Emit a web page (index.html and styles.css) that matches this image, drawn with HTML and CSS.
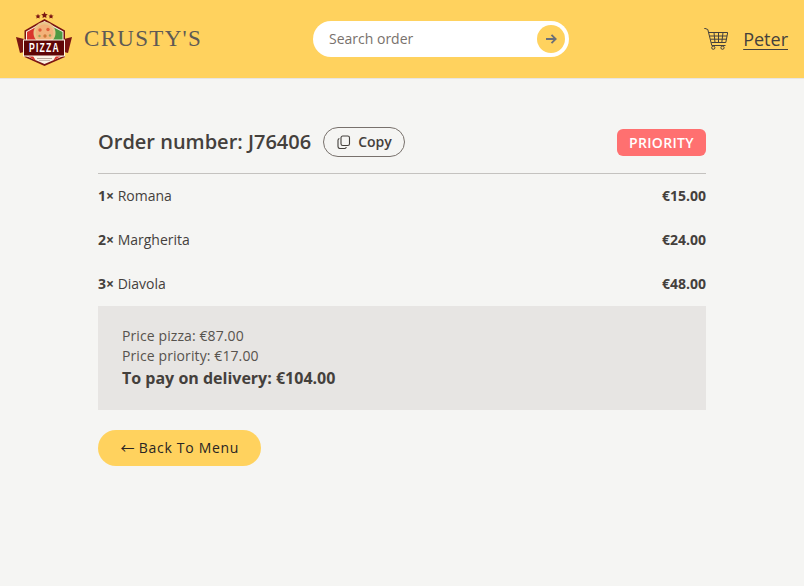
FILE: index.html
```html
<!DOCTYPE html>
<html lang="en">
<head>
<meta charset="utf-8">
<title>Crusty's</title>
<link rel="stylesheet" href="styles.css">
</head>
<body>
<header class="header">
  <a class="brand" href="#">
    <svg class="logo" width="56" height="56" viewBox="0 0 56 56">
      <path d="M22 2.800l.8 1.600 1.800.2-1.300 1.200.3 1.800-1.600-.9-1.600.9.3-1.800-1.300-1.200 1.800-.2zM28.500 .8l1 2.100 2.300.3-1.700 1.600.4 2.300-2-1.100-2 1.100.4-2.300-1.700-1.600 2.300-.3zM35 2.800l.8 1.600 1.800.2-1.300 1.200.3 1.800-1.600-.9-1.600.9.3-1.800-1.300-1.200 1.800-.2z" fill="#7a1512"/>
      <path d="M28.500 8L49 19.500V46L28.500 55 8.500 46V19.500z" fill="#7a1512"/>
      <path d="M28.500 10L47.500 20.500V45L28.500 53 10 45V20.500z" fill="#fbf3e4"/>
      <path d="M11 21L20 16 23 30H11z" fill="#d9352d"/>
      <path d="M46.500 21L37 16 34 30H46.500z" fill="#4d9a43"/>
      <circle cx="28.500" cy="22" r="11" fill="#eac68a"/>
      <circle cx="28.500" cy="22" r="8.800" fill="#f3b27a"/>
      <circle cx="24" cy="19" r="1.700" fill="#e0603a"/>
      <circle cx="32" cy="18.500" r="1.700" fill="#e0603a"/>
      <circle cx="29" cy="25" r="1.700" fill="#d07a3a"/>
      <circle cx="23.500" cy="25" r="1.200" fill="#9aa257"/>
      <circle cx="34" cy="24.500" r="1.200" fill="#9aa257"/>
      <path d="M0 26L8 28V41L4 42 2 34z" fill="#7a1512"/>
      <path d="M56 26L48 28V41L52 42 54 34z" fill="#7a1512"/>
      <path d="M12 45H17L20 50zM45 45H40L37 50z" fill="#d9352d"/>
      <rect x="21" y="47" width="15" height="1" fill="#b9a79a"/>
      <rect x="23" y="49" width="11" height="1" fill="#c9b9ad"/>
      <rect x="7.500" y="29" width="41" height="16" fill="#5f0606" stroke="#fbf3e4"/>
      <text class="logo-word" transform="translate(13 41.300) scale(.72 1)">PIZZA</text>
    </svg>
    <span class="brand-name">CRUSTY'S</span>
  </a>
  <form class="search">
    <input class="search-input" type="text" placeholder="Search order">
    <button class="search-button" type="button" aria-label="Search">
      <svg width="12" height="12" viewBox="0 0 12 12" fill="none" stroke="#6b6f78" stroke-width="1.800">
        <path d="M1 6H10.500M6.500 1.800L10.700 6 6.500 10.200"/>
      </svg>
    </button>
  </form>
  <nav class="user">
    <svg class="cart" width="24" height="22" viewBox="0 0 24 22" fill="none" stroke="#44403c" stroke-width="1">
      <path d="M0 0L3.800 1.500 7.800 17.500H21.500"/>
      <path d="M5 4.500H23.700L21.800 14.500H7.300"/>
      <path d="M5.800 8H23M6.600 11.200H22.400M10 4.500L11 14.500M14.500 4.500V14.500M19 4.500L17.800 14.500"/>
      <circle cx="9.300" cy="19.700" r="1.600"/>
      <circle cx="18.500" cy="19.700" r="1.600"/>
    </svg>
    <a class="user-name" href="#">Peter</a>
  </nav>
</header>
<main class="order">
  <div class="order-head">
    <div class="order-title">
      <h1 class="order-number">Order number: J76406</h1>
      <button class="copy" type="button">
        <svg width="14" height="14" viewBox="0 0 14 14" fill="none" stroke="#44403c" stroke-width="1.100">
          <rect x="4" y="1" width="8.500" height="9.500" rx="1.800"/>
          <path d="M2.400 3.500A1.800 1.800 0 0 0 1 5.200V11.500A2 2 0 0 0 3 13.500H7.500A1.800 1.800 0 0 0 9.300 12"/>
        </svg>
        <span>Copy</span>
      </button>
    </div>
    <span class="badge">PRIORITY</span>
  </div>
  <ul class="items">
    <li class="item"><span><b>1×</b> Romana</span><b>€15.00</b></li>
    <li class="item"><span><b>2×</b> Margherita</span><b>€24.00</b></li>
    <li class="item"><span><b>3×</b> Diavola</span><b>€48.00</b></li>
  </ul>
  <section class="summary">
    <p class="summary-line">Price pizza: €87.00</p>
    <p class="summary-line">Price priority: €17.00</p>
    <p class="summary-total">To pay on delivery: €104.00</p>
  </section>
  <a class="back" href="#"><span class="back-arrow">←</span> Back To Menu</a>
</main>
</body>
</html>
```
FILE: styles.css
```css
* {
  box-sizing: border-box;
}

html, body {
  margin: 0;
  height: 100%;
}

body {
  background: #f5f5f3;
  color: #44403c;
  font-family: "Open Sans", sans-serif;
  font-size: 14px;
  line-height: 20px;
  overflow: hidden;
}

.header {
  height: 79px;
  background: #ffd25e;
  border-bottom: 1px solid #e7e5e4;
  padding: 0 16px;
  display: grid;
  grid-template-columns: 297px 256px 1fr;
  align-items: center;
}

.brand {
  display: flex;
  align-items: center;
  gap: 12px;
  color: #5e5a55;
  text-decoration: none;
}

.logo {
  display: block;
  flex: none;
}

.logo-word {
  fill: #fff;
  font-family: "Liberation Sans", sans-serif;
  font-size: 12px;
  font-weight: 700;
  letter-spacing: 1.700px;
}

.brand-name {
  font-family: "Liberation Serif", serif;
  font-size: 23px;
  letter-spacing: 1.300px;
  line-height: 28px;
}

.search {
  height: 36px;
  background: #fff;
  border-radius: 18px;
  display: flex;
  align-items: center;
  padding: 0 4px 0 16px;
}

.search-input {
  flex: 1;
  min-width: 0;
  border: 0;
  outline: 0;
  background: transparent;
  color: #44403c;
  font: 14px/20px "Open Sans", sans-serif;
  padding: 0;
}

.search-input::placeholder {
  color: #78716c;
  opacity: 1;
}

.search-button {
  width: 28px;
  height: 28px;
  border: 0;
  border-radius: 50%;
  background: #ffd25e;
  padding: 0;
  display: flex;
  align-items: center;
  justify-content: center;
}

.user {
  display: flex;
  align-items: center;
  justify-content: flex-end;
  gap: 15px;
}

.cart {
  display: block;
}

.user-name {
  color: #44403c;
  font-size: 18px;
  line-height: 28px;
  text-decoration: underline;
  text-underline-offset: 3px;
}

.order {
  width: 608px;
  margin: 0 auto;
  padding-top: 48px;
}

.order-head {
  height: 47px;
  border-bottom: 1px solid #c4c2bf;
  padding-bottom: 15px;
  display: flex;
  align-items: flex-start;
  justify-content: space-between;
}

.order-title {
  display: flex;
  align-items: center;
  gap: 12px;
}

.order-number {
  margin: 0;
  font-size: 20px;
  line-height: 30px;
  font-weight: 600;
}

.copy {
  height: 30px;
  width: 82px;
  border: 1px solid #78716c;
  border-radius: 15px;
  background: transparent;
  color: #44403c;
  font: 600 14px/20px "Open Sans", sans-serif;
  display: flex;
  align-items: center;
  padding: 0 0 0 13px;
  gap: 7px;
}

.copy svg {
  display: block;
}

.badge {
  margin-top: 2px;
  height: 27px;
  padding: 0 12px;
  border-radius: 6px;
  background: #ff7070;
  color: #fff;
  font-size: 14px;
  line-height: 28px;
  font-weight: 600;
  letter-spacing: .35px;
}

.items {
  list-style: none;
  margin: 0;
  padding: 0;
}

.item {
  height: 44px;
  display: flex;
  align-items: center;
  justify-content: space-between;
}

.item b {
  font-weight: 700;
}

.summary {
  height: 104px;
  background: #e7e5e3;
  padding: 20px 24px;
}

.summary-line {
  margin: 0;
  color: #57534e;
  letter-spacing: .1px;
}

.summary-total {
  margin: 0;
  font-size: 16px;
  line-height: 24px;
  font-weight: 700;
}

.back {
  display: block;
  margin-top: 20px;
  height: 36px;
  width: 163px;
  padding-left: 22.500px;
  border-radius: 18px;
  background: #ffd25e;
  color: #292524;
  font-size: 14px;
  line-height: 36px;
  letter-spacing: .7px;
  text-decoration: none;
}

.back-arrow {
  font-family: "Noto Sans CJK JP", sans-serif;
  line-height: 1;
  letter-spacing: 0;
}
```
